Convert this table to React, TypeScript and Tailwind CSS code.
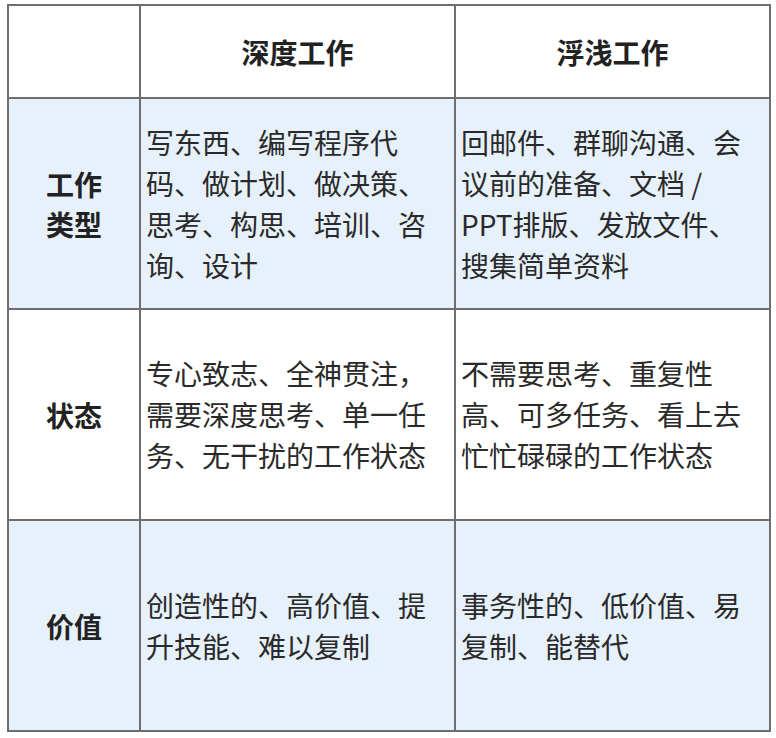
const rows = [
  {
    label: ["工作", "类型"],
    deep: ["写东西、编写程序代", "码、做计划、做决策、", "思考、构思、培训、咨", "询、设计"],
    shallow: ["回邮件、群聊沟通、会", "议前的准备、文档 /", "PPT排版、发放文件、", "搜集简单资料"],
    tint: true,
  },
  {
    label: ["状态"],
    deep: ["专心致志、全神贯注，", "需要深度思考、单一任", "务、无干扰的工作状态"],
    shallow: ["不需要思考、重复性", "高、可多任务、看上去", "忙忙碌碌的工作状态"],
    tint: false,
  },
  {
    label: ["价值"],
    deep: ["创造性的、高价值、提", "升技能、难以复制"],
    shallow: ["事务性的、低价值、易", "复制、能替代"],
    tint: true,
  },
];

function Lines({ lines }: { lines: string[] }) {
  return (
    <>
      {lines.map((l, i) => (
        <span key={i} className="block whitespace-nowrap">
          {l}
        </span>
      ))}
    </>
  );
}

export default function App() {
  return (
    <div
      className="w-[776px] h-[738px] bg-white pl-[7px] pt-[4px] text-[#222]"
      style={{ fontFamily: '"Noto Sans CJK SC", "Noto Sans", sans-serif' }}
    >
      <table className="table-fixed border-collapse border-2 border-[#6e6e6e] w-[762px]">
        <colgroup>
          <col className="w-[132px]" />
          <col className="w-[315px]" />
          <col className="w-[315px]" />
        </colgroup>
        <thead>
          <tr className="h-[93px]">
            <th className="border-2 border-[#6e6e6e]" />
            <th className="border-2 border-[#6e6e6e] text-[28px] font-bold leading-[40px]">深度工作</th>
            <th className="border-2 border-[#6e6e6e] text-[28px] font-bold leading-[40px]">浮浅工作</th>
          </tr>
        </thead>
        <tbody>
          {rows.map((r, i) => (
            <tr key={i} className={`h-[211px] ${r.tint ? "bg-[#e7f1fb]" : "bg-white"}`}>
              <td className="border-2 border-[#6e6e6e] text-center align-middle text-[28px] font-bold leading-[40px]">
                <Lines lines={r.label} />
              </td>
              <td className="border-2 border-[#6e6e6e] pl-[5px] align-middle text-[28px] leading-[41px] text-[#2a2a2a]">
                <Lines lines={r.deep} />
              </td>
              <td className="border-2 border-[#6e6e6e] pl-[5px] align-middle text-[28px] leading-[41px] text-[#2a2a2a]">
                <Lines lines={r.shallow} />
              </td>
            </tr>
          ))}
        </tbody>
      </table>
    </div>
  );
}
